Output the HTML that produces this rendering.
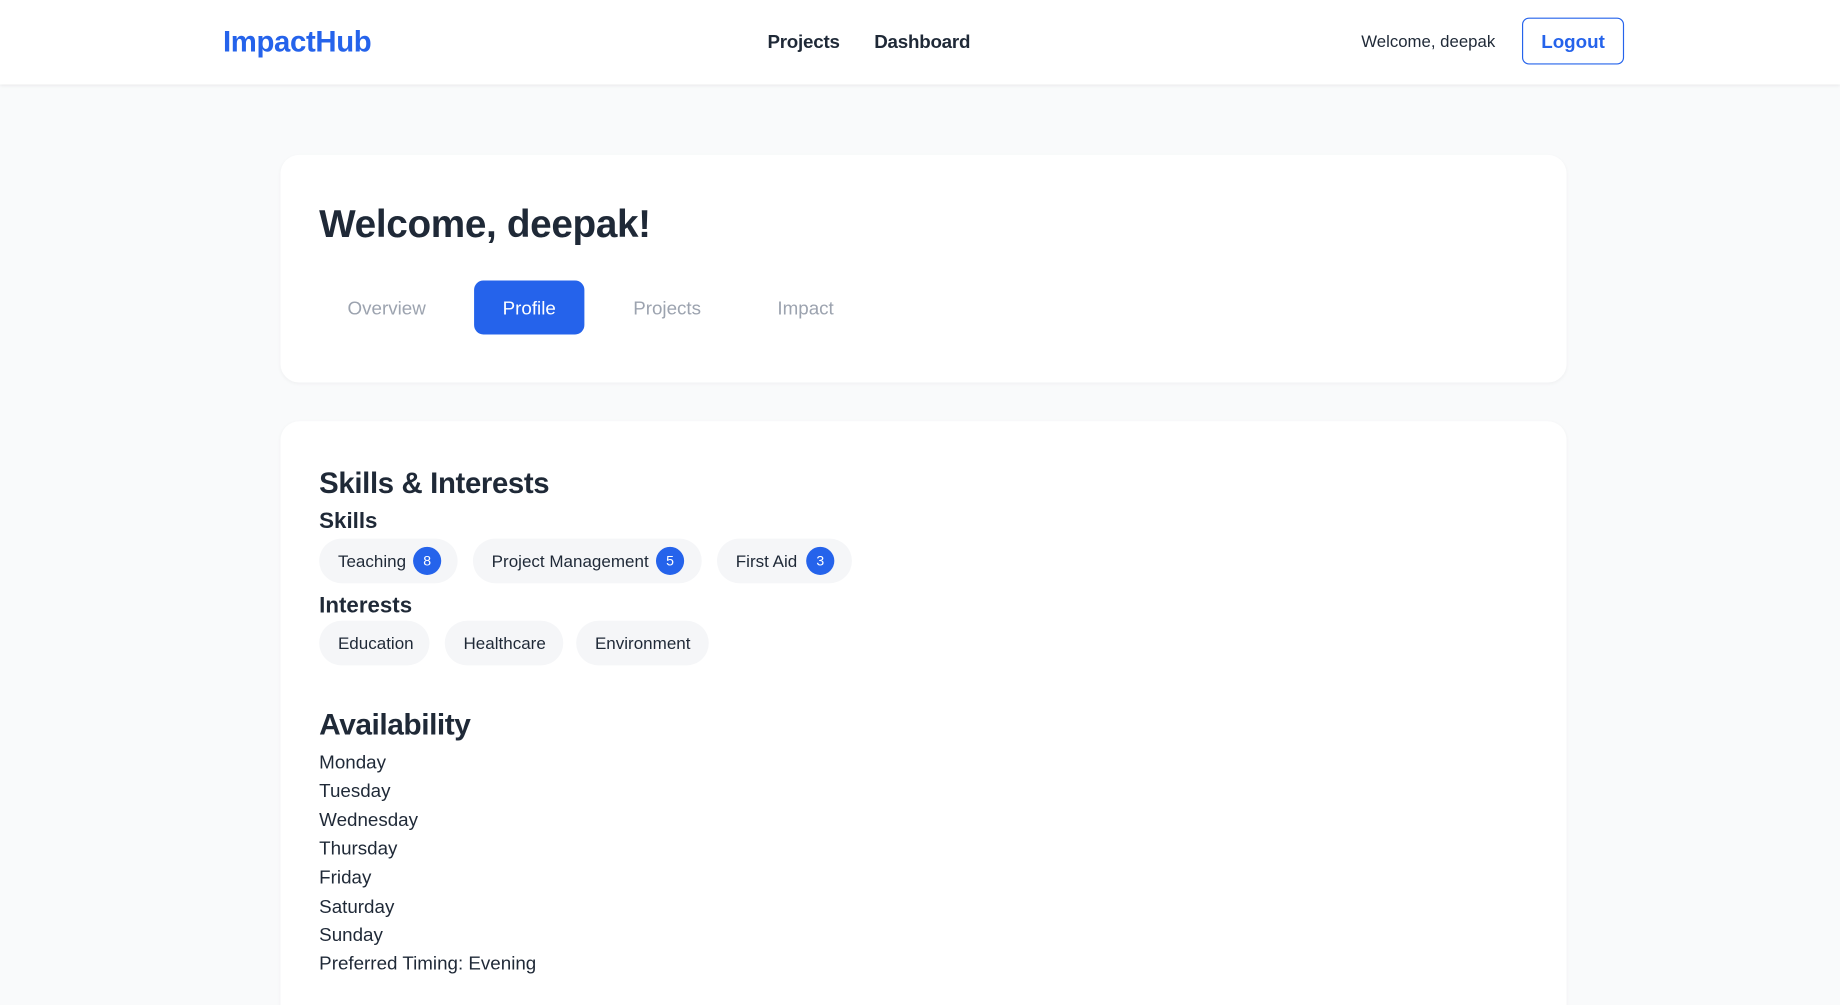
<!DOCTYPE html>
<html><head><meta charset="utf-8"><style>
*{box-sizing:border-box;margin:0;padding:0}
html,body{width:1840px;height:1005px;overflow:hidden;background:#f9fafb;font-family:"Liberation Sans",sans-serif;color:#1f2937}
#w{width:1568px;height:857px;transform:scale(1.17347);transform-origin:0 0;position:relative}
.nav{position:absolute;left:0;top:0;width:1568px;height:72px;background:#fff;box-shadow:0 1px 3px rgba(0,0,0,.08)}
.abs{position:absolute;white-space:nowrap}
.logo{left:190px;top:22px;font-size:25px;font-weight:bold;color:#2563eb;letter-spacing:-.3px}
.nl{top:28px;font-size:16px;font-weight:bold;color:#1f2937;letter-spacing:-.2px}
.logout{left:1297px;top:15px;width:87px;height:40px;border:1px solid #2563eb;border-radius:6px;color:#2563eb;font-size:16px;font-weight:bold;text-align:center;line-height:42px}
.card{position:absolute;left:239px;width:1096px;background:#fff;border-radius:16px;box-shadow:0 1px 3px rgba(0,0,0,.04)}
.tab{position:absolute;top:239px;height:46px;line-height:50px;text-align:center;font-size:16px;color:#9ca3af;border-radius:8px}
.chip{position:absolute;height:38px;border-radius:19px;background:#f5f6f8;font-size:14.5px;line-height:40px;padding-left:16px;color:#1f2937}
.b{position:absolute;top:7px;width:24px;height:24px;border-radius:12px;background:#2563eb;color:#fff;font-size:12px;line-height:24px;text-align:center}
.day{left:272px;font-size:16px;color:#1f2937}
</style></head><body><div id="w">
<div class="nav">
<div class="abs logo">ImpactHub</div>
<div class="abs nl" style="left:654px">Projects</div>
<div class="abs nl" style="left:745px">Dashboard</div>
<div class="abs" style="left:1160px;top:28px;font-size:14.3px">Welcome, deepak</div>
<div class="abs logout">Logout</div>
</div>
<div class="card" style="top:132px;height:194px"></div>
<div class="abs" style="left:272px;top:172px;font-size:33px;font-weight:bold;letter-spacing:-.3px">Welcome, deepak!</div>
<div class="tab" style="left:272px;width:115px">Overview</div>
<div class="tab" style="left:404px;width:94px;background:#2563eb;color:#fff">Profile</div>
<div class="tab" style="left:516px;width:105px">Projects</div>
<div class="tab" style="left:638px;width:97px">Impact</div>
<div class="card" style="top:359px;height:520px"></div>
<div class="abs" style="left:272px;top:398px;font-size:25px;font-weight:bold;letter-spacing:-.3px">Skills &amp; Interests</div>
<div class="abs" style="left:272px;top:434px;font-size:19px;font-weight:bold">Skills</div>
<div class="chip" style="left:272px;top:459px;width:118px">Teaching<span class="b" style="left:80px">8</span></div>
<div class="chip" style="left:403px;top:459px;width:195px">Project Management<span class="b" style="left:156px">5</span></div>
<div class="chip" style="left:611px;top:459px;width:115px">First Aid<span class="b" style="left:76px">3</span></div>
<div class="abs" style="left:272px;top:506px;font-size:19px;font-weight:bold">Interests</div>
<div class="chip" style="left:272px;top:529px;width:94px">Education</div>
<div class="chip" style="left:379px;top:529px;width:101px">Healthcare</div>
<div class="chip" style="left:491px;top:529px;width:113px">Environment</div>
<div class="abs" style="left:272px;top:604px;font-size:25.5px;font-weight:bold;letter-spacing:-.4px">Availability</div>
<div class="abs day" style="top:642px">Monday</div>
<div class="abs day" style="top:666px">Tuesday</div>
<div class="abs day" style="top:691px">Wednesday</div>
<div class="abs day" style="top:715px">Thursday</div>
<div class="abs day" style="top:740px">Friday</div>
<div class="abs day" style="top:765px">Saturday</div>
<div class="abs day" style="top:789px">Sunday</div>
<div class="abs day" style="top:813px">Preferred Timing: Evening</div>
</div></body></html>
